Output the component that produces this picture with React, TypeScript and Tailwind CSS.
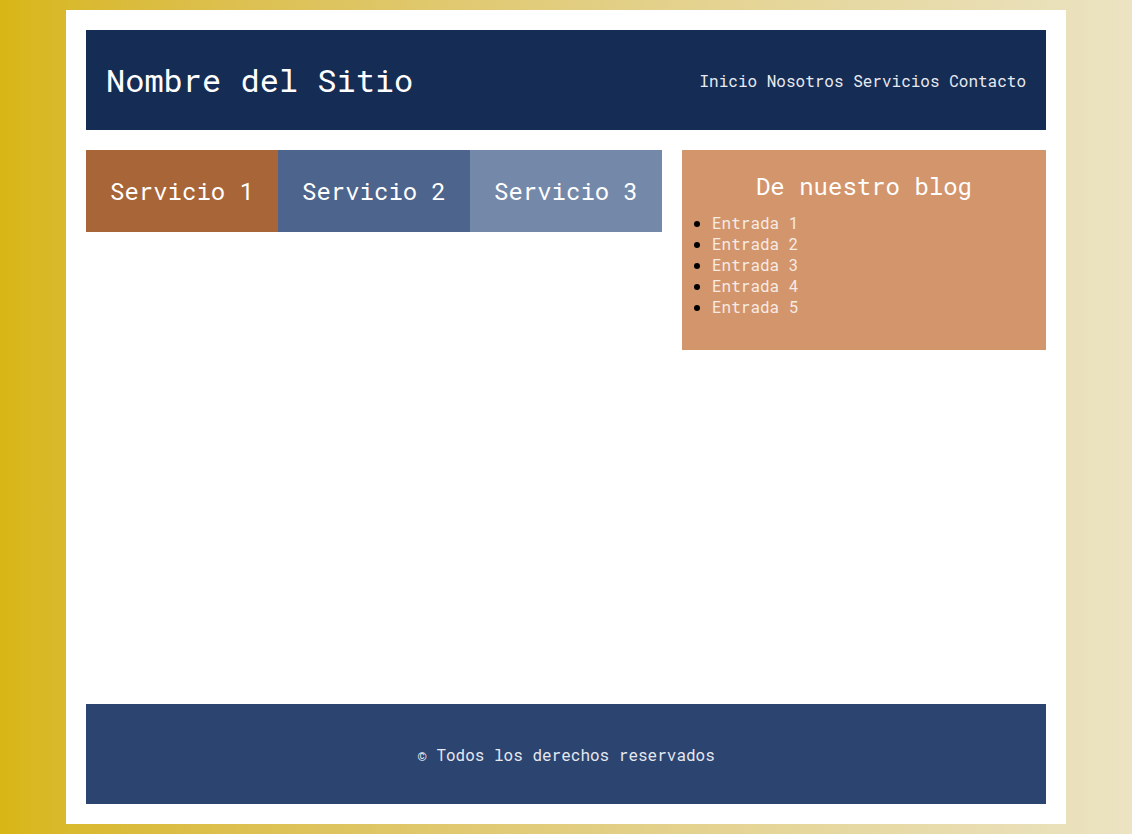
export default function App() {
  const entries = ["Entrada 1", "Entrada 2", "Entrada 3", "Entrada 4", "Entrada 5"];
  const services = [
    { name: "Servicio 1", color: "bg-[#a86538]" },
    { name: "Servicio 2", color: "bg-[#4d648c]" },
    { name: "Servicio 3", color: "bg-[#7488aa]" },
  ];

  return (
    <div
      className="flex h-[834px] w-full justify-center bg-gradient-to-r from-[#d8b614] to-[#ebe3c2] py-[10px]"
      style={{ fontFamily: '"Roboto Mono", "DejaVu Sans Mono", monospace' }}
    >
      <div className="flex w-[1000px] flex-col bg-white p-5">
        <header className="flex h-[100px] items-center justify-between bg-[#152c55] px-5">
          <h1 className="text-[32px] leading-none text-white">Nombre del Sitio</h1>
          <nav className="pt-0.5 text-base text-[#e8eaf0]">
            <a>Inicio</a> <a>Nosotros</a> <a>Servicios</a> <a>Contacto</a>
          </nav>
        </header>

        <main className="mt-5 flex flex-1 items-start gap-5">
          <section className="flex w-[576px]">
            {services.map((s) => (
              <div
                key={s.name}
                className={`flex h-[82px] w-[192px] items-center justify-center text-2xl text-white ${s.color}`}
              >
                {s.name}
              </div>
            ))}
          </section>

          <aside className="h-[200px] flex-1 bg-[#d3956c] px-4 pt-[22px]">
            <h2 className="text-center text-2xl leading-[29px] text-white">De nuestro blog</h2>
            <ul className="mt-[11px] list-disc pl-[14px] text-base leading-[21px] text-[#f7ebe3] marker:text-black">
              {entries.map((e) => (
                <li key={e}>{e}</li>
              ))}
            </ul>
          </aside>
        </main>

        <footer className="mt-5 flex h-[100px] items-center justify-center bg-[#2c4470] pt-0.5 text-base text-[#e6e9f0]">
          <span>© Todos los derechos reservados</span>
        </footer>
      </div>
    </div>
  );
}
